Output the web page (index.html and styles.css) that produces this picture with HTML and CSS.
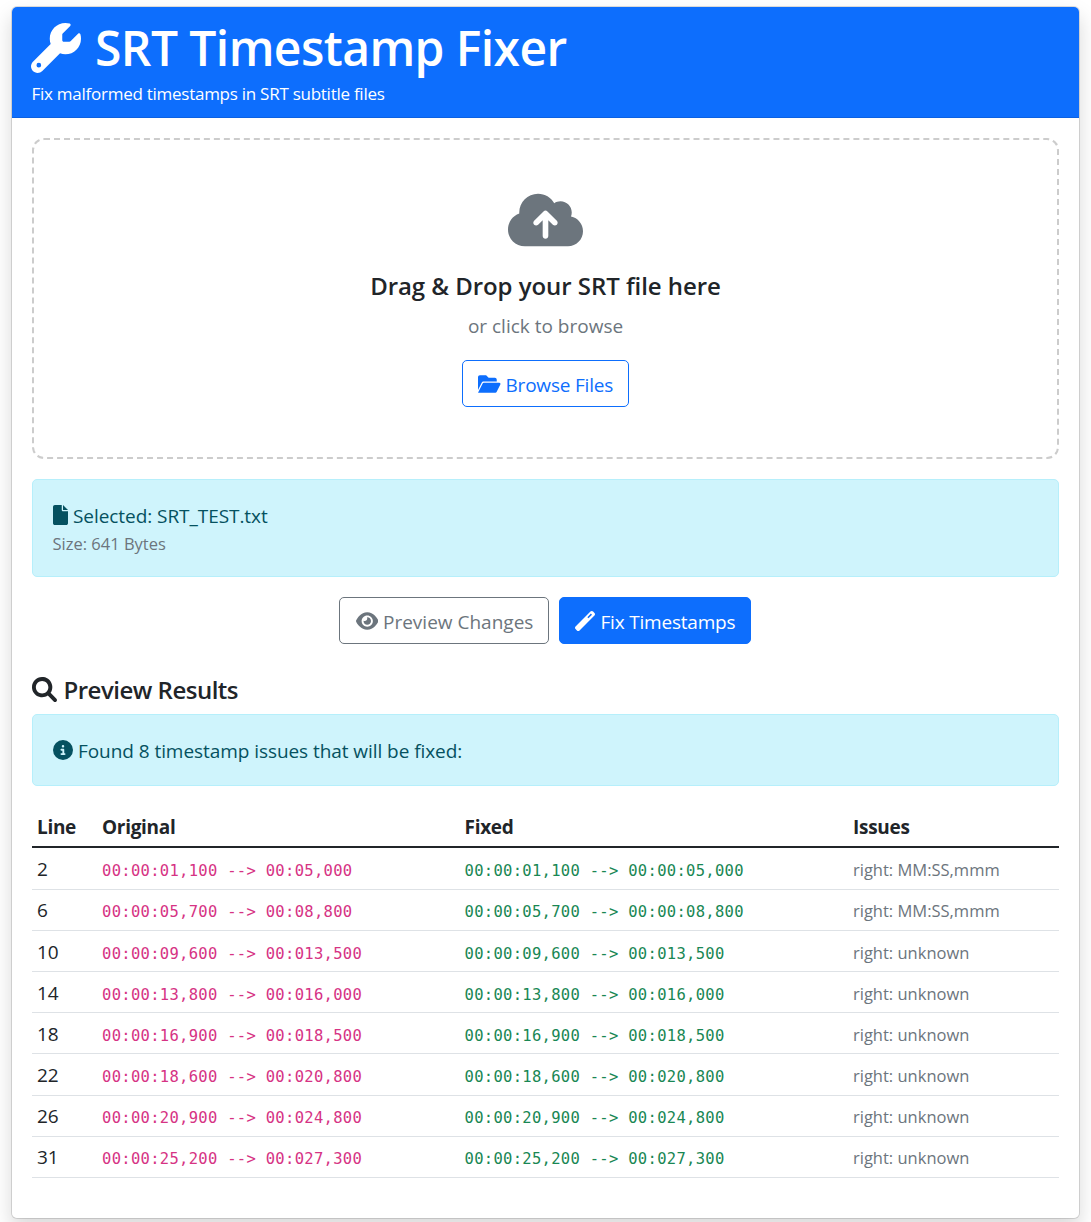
FILE: index.html
```
<!DOCTYPE html>
<html lang="en">
<head>
<meta charset="utf-8">
<title>SRT Timestamp Fixer</title>
<link rel="stylesheet" href="styles.css">
</head>
<body>
<main class="card">
  <header class="card-header">
    <h1 class="title"><svg class="icon" viewBox="0 0 512 512"><path d="M352 320c88.400 0 160-71.600 160-160c0-15.300-2.200-30.100-6.200-44.200c-3.100-10.800-16.400-13.200-24.300-5.300l-76.800 76.800c-3 3-7.100 4.700-11.300 4.700H336c-8.800 0-16-7.200-16-16V118.600c0-4.200 1.700-8.300 4.700-11.300l76.800-76.800c7.900-7.900 5.400-21.200-5.300-24.300C382.100 2.200 367.300 0 352 0C263.600 0 192 71.600 192 160c0 19.100 3.400 37.500 9.500 54.500L19.900 396.100C7.200 408.800 0 426.100 0 444.100C0 481.600 30.400 512 67.900 512c18 0 35.300-7.200 48-19.900L297.500 310.500c17 6.200 35.400 9.500 54.500 9.500zM80 408a24 24 0 1 1 0 48 24 24 0 1 1 0-48z"/></svg><span>SRT Timestamp Fixer</span></h1>
    <p class="subtitle">Fix malformed timestamps in SRT subtitle files</p>
  </header>
  <div class="card-body">
    <section class="dropzone">
      <svg class="cloud" viewBox="0 0 640 512"><path d="M144 480C64.500 480 0 415.500 0 336c0-62.800 40.200-116.200 96.200-135.900c-.1-2.700-.2-5.400-.2-8.100c0-88.400 71.600-160 160-160c59.300 0 111 32.200 138.700 80.200C409.900 102 428.300 96 448 96c53 0 96 43 96 96c0 12.200-2.300 23.800-6.400 34.600C596 238.400 640 290.100 640 352c0 70.700-57.300 128-128 128H144zm79-217c-9.400 9.400-9.400 24.600 0 33.900s24.600 9.400 33.900 0l39-39V392c0 13.300 10.700 24 24 24s24-10.700 24-24V257.900l39 39c9.400 9.400 24.600 9.400 33.900 0s9.400-24.600 0-33.900l-80-80c-9.400-9.400-24.600-9.400-33.900 0l-80 80z"/></svg>
      <h2 class="heading drop-title">Drag &amp; Drop your SRT file here</h2>
      <p class="drop-hint">or click to browse</p>
      <button class="btn btn-outline-primary"><svg class="icon" viewBox="0 0 576 512"><path d="M147.800 192H480V144C480 117.500 458.500 96 432 96h-160l-64-64h-160C21.490 32 0 53.490 0 80v328.400l90.540-181.100C101.400 205.600 123.400 192 147.800 192zM543.100 224H147.800C135.700 224 124.600 230.800 119.200 241.700L0 480h447.100c12.120 0 23.200-6.852 28.620-17.690l96-192C583.200 249 567.700 224 543.100 224z"/></svg><span class="browse-label">Browse Files</span></button>
    </section>
    <section class="alert file-info">
      <div class="row"><svg class="icon" viewBox="0 0 384 512"><path d="M256 0v128h128L256 0zM224 128L224 0H48C21.490 0 0 21.490 0 48v416C0 490.500 21.490 512 48 512h288c26.510 0 48-21.490 48-48V160h-127.100C238.300 160 224 145.700 224 128z"/></svg><span class="file-name">Selected: SRT_TEST.txt</span></div>
      <div class="row small muted"><span class="file-size">Size: 641 Bytes</span></div>
    </section>
    <div class="actions">
      <button class="btn btn-outline-secondary"><svg class="icon" viewBox="0 0 576 512"><path d="M279.600 160.400C282.400 160.100 285.200 160 288 160C341 160 384 202.100 384 256C384 309 341 352 288 352C234.100 352 192 309 192 256C192 253.200 192.100 250.400 192.400 247.600C201.700 252.100 212.500 256 224 256C259.300 256 288 227.300 288 192C288 180.500 284.800 169.700 279.600 160.400zM480.600 112.600C527.400 156 558.700 207.100 573.500 243.700C576.800 251.600 576.800 260.400 573.500 268.300C558.700 304 527.400 355.100 480.600 399.400C433.500 443.200 368.800 480 288 480C207.200 480 142.500 443.200 95.420 399.400C48.620 355.100 17.340 304 2.461 268.300C-.8205 260.400-.8205 251.600 2.461 243.700C17.340 207.100 48.620 156 95.420 112.600C142.500 68.840 207.200 32 288 32C368.800 32 433.500 68.840 480.600 112.600zM288 112C208.500 112 144 176.500 144 256C144 335.500 208.500 400 288 400C367.500 400 432 335.500 432 256C432 176.500 367.500 112 288 112z"/></svg><span class="preview-label">Preview Changes</span></button>
      <button class="btn btn-primary"><svg class="icon" viewBox="0 0 512 512"><path fill-rule="evenodd" d="M14.100 463.300c-18.700-18.700-18.700-49.100 0-67.900L395.400 14.100c18.700-18.700 49.100-18.700 67.900 0l34.600 34.600c18.700 18.700 18.700 49.100 0 67.900L116.500 497.900c-18.700 18.700-49.100 18.700-67.900 0L14.100 463.300zM345 185l90-90-28-28-90 90z"/></svg><span class="fix-label">Fix Timestamps</span></button>
    </div>
    <h2 class="heading results-title"><svg class="icon" viewBox="0 0 512 512"><path d="M500.300 443.700l-119.700-119.700c27.220-40.410 40.650-90.900 33.460-144.700c-12.230-91.550-87.280-166-178.900-177.600c-136.200-17.240-250.700 97.280-233.400 233.400c11.600 91.640 86.070 166.700 177.600 178.900c53.810 7.191 104.300-6.235 144.700-33.460l119.700 119.700c15.620 15.620 40.950 15.620 56.570 0C515.900 484.700 515.900 459.300 500.300 443.700zM79.100 208c0-70.580 57.420-128 128-128s128 57.420 128 128c0 70.580-57.420 128-128 128S79.100 278.600 79.100 208z"/></svg><span>Preview Results</span></h2>
    <section class="alert summary">
      <div class="row"><svg class="icon" viewBox="0 0 512 512"><path d="M256 512A256 256 0 1 0 256 0a256 256 0 1 0 0 512zM216 336h24V272H216c-13.300 0-24-10.700-24-24s10.700-24 24-24h48c13.300 0 24 10.700 24 24v88h8c13.300 0 24 10.700 24 24s-10.700 24-24 24H216c-13.300 0-24-10.700-24-24s10.700-24 24-24zm40-208a32 32 0 1 1 0 64 32 32 0 1 1 0-64z"/></svg><span class="found">Found 8 timestamp issues that will be fixed:</span></div>
    </section>
    <table class="table">
      <colgroup><col class="col-line"><col class="col-original"><col class="col-fixed"><col></colgroup>
      <thead><tr><th>Line</th><th>Original</th><th>Fixed</th><th>Issues</th></tr></thead>
      <tbody>
        <tr><td>2</td><td class="code original">00:00:01,100 --&gt; 00:05,000</td><td class="code fixed">00:00:01,100 --&gt; 00:00:05,000</td><td class="issue">right: MM:SS,mmm</td></tr>
        <tr><td>6</td><td class="code original">00:00:05,700 --&gt; 00:08,800</td><td class="code fixed">00:00:05,700 --&gt; 00:00:08,800</td><td class="issue">right: MM:SS,mmm</td></tr>
        <tr><td>10</td><td class="code original">00:00:09,600 --&gt; 00:013,500</td><td class="code fixed">00:00:09,600 --&gt; 00:013,500</td><td class="issue">right: unknown</td></tr>
        <tr><td>14</td><td class="code original">00:00:13,800 --&gt; 00:016,000</td><td class="code fixed">00:00:13,800 --&gt; 00:016,000</td><td class="issue">right: unknown</td></tr>
        <tr><td>18</td><td class="code original">00:00:16,900 --&gt; 00:018,500</td><td class="code fixed">00:00:16,900 --&gt; 00:018,500</td><td class="issue">right: unknown</td></tr>
        <tr><td>22</td><td class="code original">00:00:18,600 --&gt; 00:020,800</td><td class="code fixed">00:00:18,600 --&gt; 00:020,800</td><td class="issue">right: unknown</td></tr>
        <tr><td>26</td><td class="code original">00:00:20,900 --&gt; 00:024,800</td><td class="code fixed">00:00:20,900 --&gt; 00:024,800</td><td class="issue">right: unknown</td></tr>
        <tr><td>31</td><td class="code original">00:00:25,200 --&gt; 00:027,300</td><td class="code fixed">00:00:25,200 --&gt; 00:027,300</td><td class="issue">right: unknown</td></tr>
      </tbody>
    </table>
  </div>
</main>
</body>
</html>
```
FILE: styles.css
```
* { box-sizing: border-box; }
body {
  margin: 0;
  padding: 6px 11px 0;
  height: 1222px;
  overflow: hidden;
  background: #fff;
  color: #212529;
  font: 400 19px/30px "Open Sans", "Noto Sans", sans-serif;
}
h1, h2, p { margin: 0; }
.icon { height: 1em; flex: none; fill: currentColor; }

.card {
  height: 1213px;
  border: 1px solid rgba(0, 0, 0, .125);
  border-radius: 6px;
  background: #fff;
  background-clip: padding-box;
  box-shadow: 0 10px 20px rgba(0, 0, 0, .15);
}
.card-header {
  height: 111px;
  padding: 11px 19.500px;
  border-bottom: 1px solid #0c61e1;
  border-radius: 5px 5px 0 0;
  background: #0d6efd;
  color: #fff;
}
.title {
  display: flex;
  align-items: center;
  gap: 14px;
  margin-left: -.5px;
  font-size: 48px;
  font-weight: 600;
  line-height: 60px;
  letter-spacing: -.58px;
}
.title .icon { height: 50px; }
.subtitle { padding-top: 1px; font-size: 17px; letter-spacing: -.26px; }
.card-body { padding: 20px; }

.dropzone {
  display: flex;
  flex-direction: column;
  align-items: center;
  height: 321px;
  padding-top: 50px;
  border: 2px dashed #ccc;
  border-radius: 12px;
}
.cloud { width: 75px; height: 60px; fill: #6c757d; }
.heading { font-size: 24px; font-weight: 600; line-height: 30px; }
.drop-title { margin-top: 21px; letter-spacing: -.05px; }
.drop-hint { margin-top: 10px; color: #6c757d; }

.btn {
  display: flex;
  align-items: center;
  gap: 5px;
  height: 47px;
  padding: 2px 15px 0;
  border: 1px solid;
  border-radius: 5px;
  background: #fff;
  font: inherit;
  white-space: nowrap;
}
.btn .icon { height: 20px; margin-top: -2px; }
.btn-outline-primary { width: 167px; margin-top: 19px; color: #0d6efd; }
.browse-label, .fix-label { letter-spacing: -.2px; }
.btn-outline-secondary { width: 210px; padding-left: 16px; color: #6c757d; }
.btn-primary { gap: 6px; width: 192px; border-color: #0d6efd; background: #0d6efd; color: #fff; }

.alert {
  padding: 20px 19.500px;
  border: 1px solid #b6effb;
  border-radius: 5px;
  background: #cff4fc;
  color: #055160;
}
.alert .row { display: flex; align-items: center; gap: 5.500px; height: 30px; }
.alert .icon { height: 20px; }
.file-name, .found { padding-top: 2px; letter-spacing: -.06px; }
.file-info { height: 98px; margin-top: 20px; }
.small { font-size: 16.500px; }
.alert .muted { height: 27px; color: #6c757d; }
.actions {
  display: flex;
  justify-content: center;
  gap: 10px;
  margin-top: 20px;
  padding-right: 2px;
}
.results-title {
  display: flex;
  align-items: center;
  gap: 7px;
  margin-top: 31px;
  margin-left: -.5px;
  letter-spacing: -.5px;
}
.results-title .icon { height: 25px; margin-top: -1px; }
.summary { height: 72px; margin-top: 9px; }

.table {
  width: 100%;
  margin-top: 20px;
  border-collapse: separate;
  border-spacing: 0;
  table-layout: fixed;
}
.col-line { width: 65px; }
.col-original { width: 362.500px; }
.col-fixed { width: 388.500px; }
.table th, .table td { padding: 0 5px; text-align: left; white-space: nowrap; }
.table th {
  height: 42px;
  padding-top: 2px;
  border-bottom: 2px solid #212529;
  font-weight: 700;
  letter-spacing: -.3px;
}
.table td { height: 41.150px; padding-top: 1px; border-bottom: 1px solid #dee2e6; line-height: 30px; }
.table tbody tr:first-child td { height: 41.800px; }
.table .code { padding-top: 5px; font: 15.500px/30px "DejaVu Sans Mono", monospace; letter-spacing: .3px; }
.original { color: #d63384; }
.fixed { color: #198754; }
.table .issue { padding-top: 3px; color: #6c757d; font-size: 16.500px; }
```
